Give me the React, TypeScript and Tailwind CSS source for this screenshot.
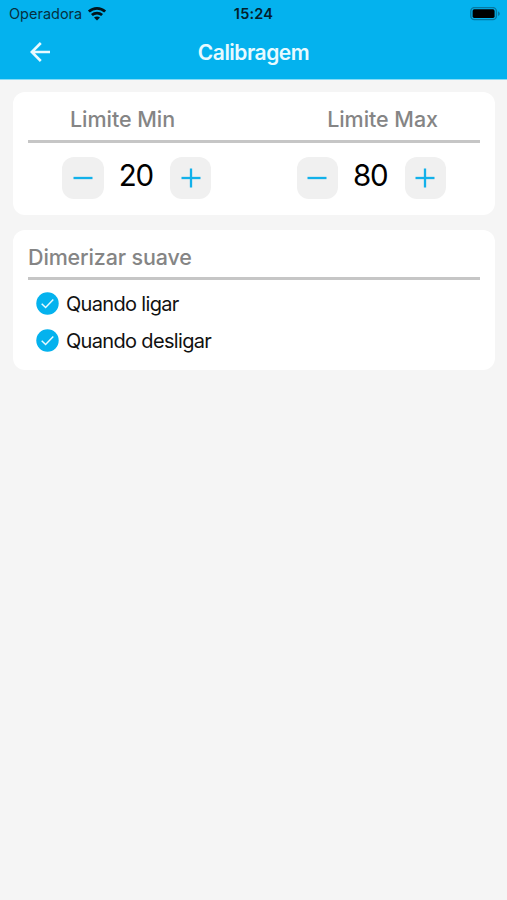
import React, { useState } from "react";

function WifiIcon() {
  return (
    <svg width="18" height="14" viewBox="0 0 18 14" fill="none" stroke="#03141c" strokeWidth="2.7">
      <path d="M0.9 4.6C5.4 0.3 12.6 0.3 17.1 4.6" />
      <path d="M3.9 8.1C6.8 5.4 11.2 5.4 14.1 8.1" />
      <path d="M9 13.6L6 10.5C7.7 9 10.3 9 12 10.5Z" fill="#03141c" stroke="none" />
    </svg>
  );
}

function BatteryIcon() {
  return (
    <svg width="31" height="14" viewBox="0 0 31 14">
      <rect x="0.8" y="0.6" width="25.6" height="12" rx="3.6" fill="none" stroke="#0679a2" strokeWidth="1.4" />
      <rect x="2.6" y="2.3" width="22" height="8.6" rx="1.6" fill="#000" />
      <path d="M28 4.5C30.4 5.2 30.4 8.2 28 8.9Z" fill="#0679a2" />
    </svg>
  );
}

function StepButton({ kind, onClick }: { kind: "minus" | "plus"; onClick: () => void }) {
  return (
    <button
      onClick={onClick}
      aria-label={kind}
      className="flex size-[41.5px] items-center justify-center rounded-[12px] bg-[#f0f0f0]"
    >
      <svg width="20" height="20" viewBox="0 0 20 20" stroke="#12b1ea" strokeWidth="2.3">
        <path d="M0.5 10H19.5" />
        {kind === "plus" && <path d="M10 0.5V19.5" />}
      </svg>
    </button>
  );
}

function Stepper({ initial }: { initial: number }) {
  const [value, setValue] = useState(initial);
  return (
    <div className="flex w-[149.5px] items-center justify-between">
      <StepButton kind="minus" onClick={() => setValue(value - 1)} />
      <span className="-mt-[5px] mr-[2px] text-[29.5px] leading-[36px] tracking-[-1.2px] text-black">{value}</span>
      <StepButton kind="plus" onClick={() => setValue(value + 1)} />
    </div>
  );
}

function CheckRow({ label }: { label: string }) {
  const [checked, setChecked] = useState(true);
  return (
    <button onClick={() => setChecked(!checked)} className="flex h-[37px] items-center gap-[7px]">
      <svg width="23" height="23" viewBox="0 0 23 23" fill="none">
        <circle cx="11.5" cy="11.5" r="11.2" fill={checked ? "#04b2ee" : "#d0d0d0"} />
        <path d="M5.7 11.7L9.6 15.5L17.3 7.5" stroke="#e8faff" strokeWidth="1.5" />
      </svg>
      <span className="text-[20px] leading-6 tracking-[-0.67px] text-[#111]">{label}</span>
    </button>
  );
}

export default function App() {
  return (
    <div className="flex h-[900px] w-[507px] flex-col bg-[#f5f5f5] font-['Inter','Liberation_Sans',sans-serif]">
      <header className="h-[80px] border-b border-[#87dcf6] bg-[#04b2ee]">
        <div className="grid h-[27px] grid-cols-[1fr_auto_1fr] items-center pr-[6px] pl-[9px] text-[#06303f]">
          <div className="flex items-center gap-[6px]">
            <span className="text-[14.5px] leading-5">Operadora</span>
            <WifiIcon />
          </div>
          <span className="mr-[3px] text-center text-[14.5px] leading-5 font-semibold tracking-[0.2px] text-[#03202b]">15:24</span>
          <div className="flex justify-end">
            <BatteryIcon />
          </div>
        </div>
        <div className="grid h-[50px] grid-cols-[80px_1fr_80px] items-center">
          <button aria-label="Voltar" className="pl-[30px]">
            <svg width="20" height="20" viewBox="0 0 20 20" fill="none" stroke="#e8faff" strokeWidth="2.6">
              <path d="M20 10H2M10.8 1L1.8 10L10.8 19" />
            </svg>
          </button>
          <h1 className="pt-[2px] text-center text-[21px] leading-7 font-semibold tracking-[-0.5px] text-[#e8faff]">Calibragem</h1>
        </div>
      </header>
      <main className="flex flex-col gap-[14.5px] pt-[12px] pr-[12px] pl-[13px]">
        <section className="h-[123px] rounded-[12px] bg-white px-[15px]">
          <div className="flex h-[48px] items-center justify-between px-[42px] pt-[7px] text-[21.5px] font-medium text-[#858585]">
            <h2 className="tracking-[-0.05px]">Limite Min</h2>
            <h2 className="tracking-[-0.05px]">Limite Max</h2>
          </div>
          <div className="h-[3px] bg-[#c6c6c6]" />
          <div className="flex justify-between px-[34px] pt-[14px]">
            <Stepper initial={20} />
            <Stepper initial={80} />
          </div>
        </section>
        <section className="h-[140.5px] rounded-[12px] bg-white px-[15px]">
          <h2 className="flex h-[47.5px] items-center pt-[7px] text-[21.5px] font-medium tracking-[-0.14px] text-[#858585]">Dimerizar suave</h2>
          <div className="h-[3px] bg-[#c6c6c6]" />
          <div className="flex flex-col pt-[5px] pl-[8px]">
            <CheckRow label="Quando ligar" />
            <CheckRow label="Quando desligar" />
          </div>
        </section>
      </main>
    </div>
  );
}
